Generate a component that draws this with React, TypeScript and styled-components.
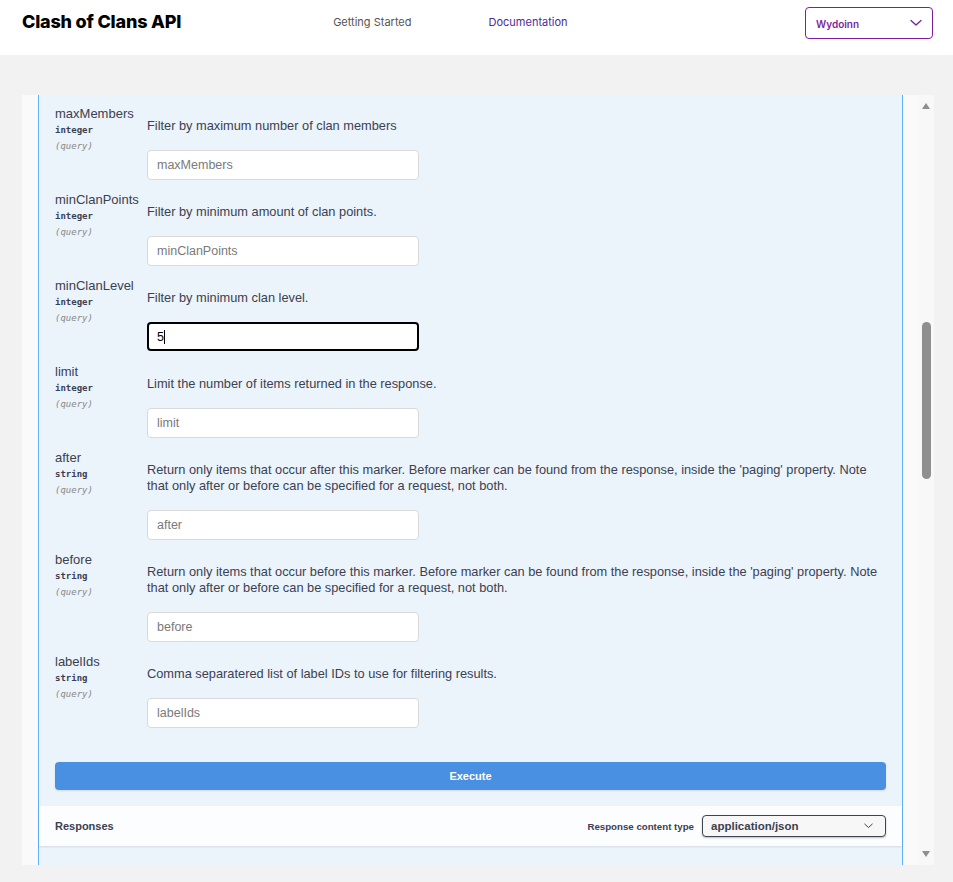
import styled, { createGlobalStyle } from "styled-components";

const GlobalStyle = createGlobalStyle`
  body {
    margin: 0;
    background: #f2f2f2;
    font-family: "Liberation Sans", Arial, sans-serif;
  }
`;

type Param = {
  name: string;
  type: string;
  desc: string;
  value?: string;
};

const params: Param[] = [
  { name: "maxMembers", type: "integer", desc: "Filter by maximum number of clan members" },
  { name: "minClanPoints", type: "integer", desc: "Filter by minimum amount of clan points." },
  { name: "minClanLevel", type: "integer", desc: "Filter by minimum clan level.", value: "5" },
  { name: "limit", type: "integer", desc: "Limit the number of items returned in the response." },
  {
    name: "after",
    type: "string",
    desc: "Return only items that occur after this marker. Before marker can be found from the response, inside the 'paging' property. Note that only after or before can be specified for a request, not both.",
  },
  {
    name: "before",
    type: "string",
    desc: "Return only items that occur before this marker. Before marker can be found from the response, inside the 'paging' property. Note that only after or before can be specified for a request, not both.",
  },
  { name: "labelIds", type: "string", desc: "Comma separatered list of label IDs to use for filtering results." },
];

const Chevron = ({ color }: { color: string }) => (
  <svg width="12" height="8" viewBox="0 0 12 8" fill="none">
    <path d="M1 1.5 L6 6 L11 1.5" stroke={color} strokeWidth="1.3" strokeLinecap="round" strokeLinejoin="round" />
  </svg>
);

const App = () => {
  return (
    <>
      <GlobalStyle />
      <Header>
        <HeaderRow>
          <Title>Clash of Clans API</Title>
          <Nav>
            <NavLink>Getting Started</NavLink>
            <NavLink $active>Documentation</NavLink>
          </Nav>
          <AccountSelect>
            <span>Wydoinn</span>
            <Chevron color="#7b1fa2" />
          </AccountSelect>
        </HeaderRow>
      </Header>
      <Main>
        <ScrollBox>
          <ScrollContent>
            <Gutter />
            <OpBlock>
              <Params>
                {params.map((p) => (
                  <ParamRow key={p.name}>
                    <NameCol>
                      <ParamName>{p.name}</ParamName>
                      <ParamType>{p.type}</ParamType>
                      <ParamIn>(query)</ParamIn>
                    </NameCol>
                    <DescCol>
                      <Desc>{p.desc}</Desc>
                      {p.value ? (
                        <FocusedField>
                          {p.value}
                          <Caret />
                        </FocusedField>
                      ) : (
                        <Field placeholder={p.name} readOnly />
                      )}
                    </DescCol>
                  </ParamRow>
                ))}
              </Params>
              <ExecuteWrap>
                <ExecuteButton>Execute</ExecuteButton>
              </ExecuteWrap>
              <ResponsesHeader>
                <SectionTitle>Responses</SectionTitle>
                <ContentType>
                  <ContentLabel>Response content type</ContentLabel>
                  <ContentSelect>
                    <span>application/json</span>
                    <Chevron color="#3b4151" />
                  </ContentSelect>
                </ContentType>
              </ResponsesHeader>
              <ResponsesBody />
            </OpBlock>
            <Gutter />
          </ScrollContent>
          <ScrollTrack>
            <ArrowUp />
            <Thumb />
            <ArrowDown />
          </ScrollTrack>
        </ScrollBox>
      </Main>
    </>
  );
};

const Header = styled.header`
  height: 55px;
  background: #fff;
  padding: 0 20px 0 22px;
  box-sizing: border-box;
`;

const HeaderRow = styled.div`
  height: 43px;
  display: flex;
  align-items: center;
`;

const Title = styled.h1`
  margin: 0;
  font-family: "Inter", "Liberation Sans", sans-serif;
  font-size: 18px;
  font-weight: 800;
  color: #000;
  letter-spacing: -0.2px;
`;

const Nav = styled.nav`
  display: flex;
  gap: 77px;
  margin-left: 152px;
`;

const NavLink = styled.a<{ $active?: boolean }>`
  font-family: "Inter", "Liberation Sans", sans-serif;
  font-size: 11px;
  color: ${(p) => (p.$active ? "#4e2a98" : "#555")};
  text-decoration: none;
`;

const AccountSelect = styled.div`
  margin-left: auto;
  margin-top: 2px;
  width: 128px;
  height: 32px;
  box-sizing: border-box;
  border: 1px solid #7b1fa2;
  border-radius: 4px;
  padding: 0 10px;
  display: flex;
  align-items: center;
  justify-content: space-between;
  font-family: "Inter", "Liberation Sans", sans-serif;
  font-size: 10px;
  font-weight: 600;
  color: #7b1fa2;

  span {
    margin-top: 2px;
  }
`;

const Main = styled.main`
  padding: 40px 19px 0 22px;
`;

const ScrollBox = styled.div`
  display: flex;
  height: 770px;
  overflow: hidden;
`;

const ScrollContent = styled.div`
  flex: 1;
  display: flex;
  background: #fafafa;
  overflow: hidden;
`;

const Gutter = styled.div`
  width: 16px;
  flex-shrink: 0;
`;

const OpBlock = styled.div`
  flex: 1;
  border-left: 1px solid #61affe;
  border-right: 1px solid #61affe;
  background: #ebf3fb;
  color: #3b4151;
`;

const Params = styled.div`
  padding: 10px 16px 0;
`;

const ParamRow = styled.div`
  display: flex;
  padding-bottom: 11px;
`;

const NameCol = styled.div`
  width: 92px;
  flex-shrink: 0;
  padding-top: 1px;
  margin-bottom: -1px;
`;

const ParamName = styled.div`
  font-size: 13px;
  line-height: 16px;
  color: #3b4151;
`;

const ParamType = styled.div`
  font-family: "DejaVu Sans Mono", "Liberation Mono", monospace;
  font-size: 9px;
  font-weight: 700;
  line-height: 17px;
  color: #3b4151;
`;

const ParamIn = styled.div`
  font-family: "DejaVu Sans Mono", "Liberation Mono", monospace;
  font-size: 9px;
  font-style: italic;
  line-height: 15px;
  color: #888;
`;

const DescCol = styled.div`
  flex: 1;
  padding-top: 13px;
`;

const Desc = styled.p`
  margin: 0 0 16px;
  font-size: 12.8px;
  line-height: 16px;
  color: #3b4151;
`;

const Field = styled.input`
  display: block;
  width: 272px;
  height: 30px;
  box-sizing: border-box;
  border: 1px solid #d9d9d9;
  border-radius: 4px;
  background: #fff;
  padding: 0 9px;
  font-family: "Liberation Sans", Arial, sans-serif;
  font-size: 12.5px;
  color: #3b4151;
  outline: none;

  &::placeholder {
    color: #7a7a7a;
  }
`;

const FocusedField = styled.div`
  width: 272px;
  height: 29px;
  box-sizing: border-box;
  border: 2px solid #000;
  border-radius: 4px;
  background: #fff;
  padding: 0 8px;
  display: flex;
  align-items: center;
  font-size: 12.5px;
  color: #000;
  margin-bottom: 1px;
`;

const Caret = styled.span`
  display: inline-block;
  width: 1px;
  height: 14px;
  background: #000;
`;

const ExecuteWrap = styled.div`
  padding: 23px 16px 16px;
`;

const ExecuteButton = styled.button`
  display: block;
  width: 100%;
  height: 28px;
  border: none;
  border-radius: 4px;
  background: #4990e2;
  color: #fff;
  font-family: "Liberation Sans", Arial, sans-serif;
  font-size: 11px;
  font-weight: 700;
  box-shadow: 0 1px 2px rgba(0, 0, 0, 0.1);
`;

const ResponsesHeader = styled.div`
  height: 40px;
  padding: 0 16px;
  display: flex;
  align-items: center;
  justify-content: space-between;
  background: #fcfdfe;
  box-shadow: 0 1px 2px rgba(0, 0, 0, 0.1);
`;

const SectionTitle = styled.h4`
  margin: 0;
  font-size: 11px;
  font-weight: 700;
  color: #3b4151;
`;

const ContentType = styled.div`
  display: flex;
  align-items: center;
  gap: 8px;
`;

const ContentLabel = styled.span`
  font-size: 9.7px;
  font-weight: 700;
  color: #3b4151;
`;

const ContentSelect = styled.div`
  width: 184px;
  height: 22px;
  box-sizing: border-box;
  border: 1px solid #41444e;
  border-radius: 4px;
  background: #f7f7f7;
  padding: 0 12px 0 8px;
  display: flex;
  align-items: center;
  justify-content: space-between;
  font-size: 11.5px;
  font-weight: 700;
  color: #3b4151;
  box-shadow: 0 1px 2px rgba(0, 0, 0, 0.25);

  svg {
    width: 9px;
  }
`;

const ResponsesBody = styled.div`
  height: 60px;
`;

const ScrollTrack = styled.div`
  position: relative;
  width: 15px;
  flex-shrink: 0;
  background: #f8f8f8;
`;

const ArrowUp = styled.div`
  position: absolute;
  top: 8px;
  left: 3px;
  width: 0;
  height: 0;
  border-left: 4.5px solid transparent;
  border-right: 4.5px solid transparent;
  border-bottom: 6px solid #8f8f8f;
`;

const ArrowDown = styled.div`
  position: absolute;
  bottom: 8px;
  left: 3px;
  width: 0;
  height: 0;
  border-left: 4.5px solid transparent;
  border-right: 4.5px solid transparent;
  border-top: 6px solid #8f8f8f;
`;

const Thumb = styled.div`
  position: absolute;
  top: 227px;
  left: 3px;
  width: 9px;
  height: 157px;
  border-radius: 5px;
  background: #8f8f8f;
`;

export default App;
